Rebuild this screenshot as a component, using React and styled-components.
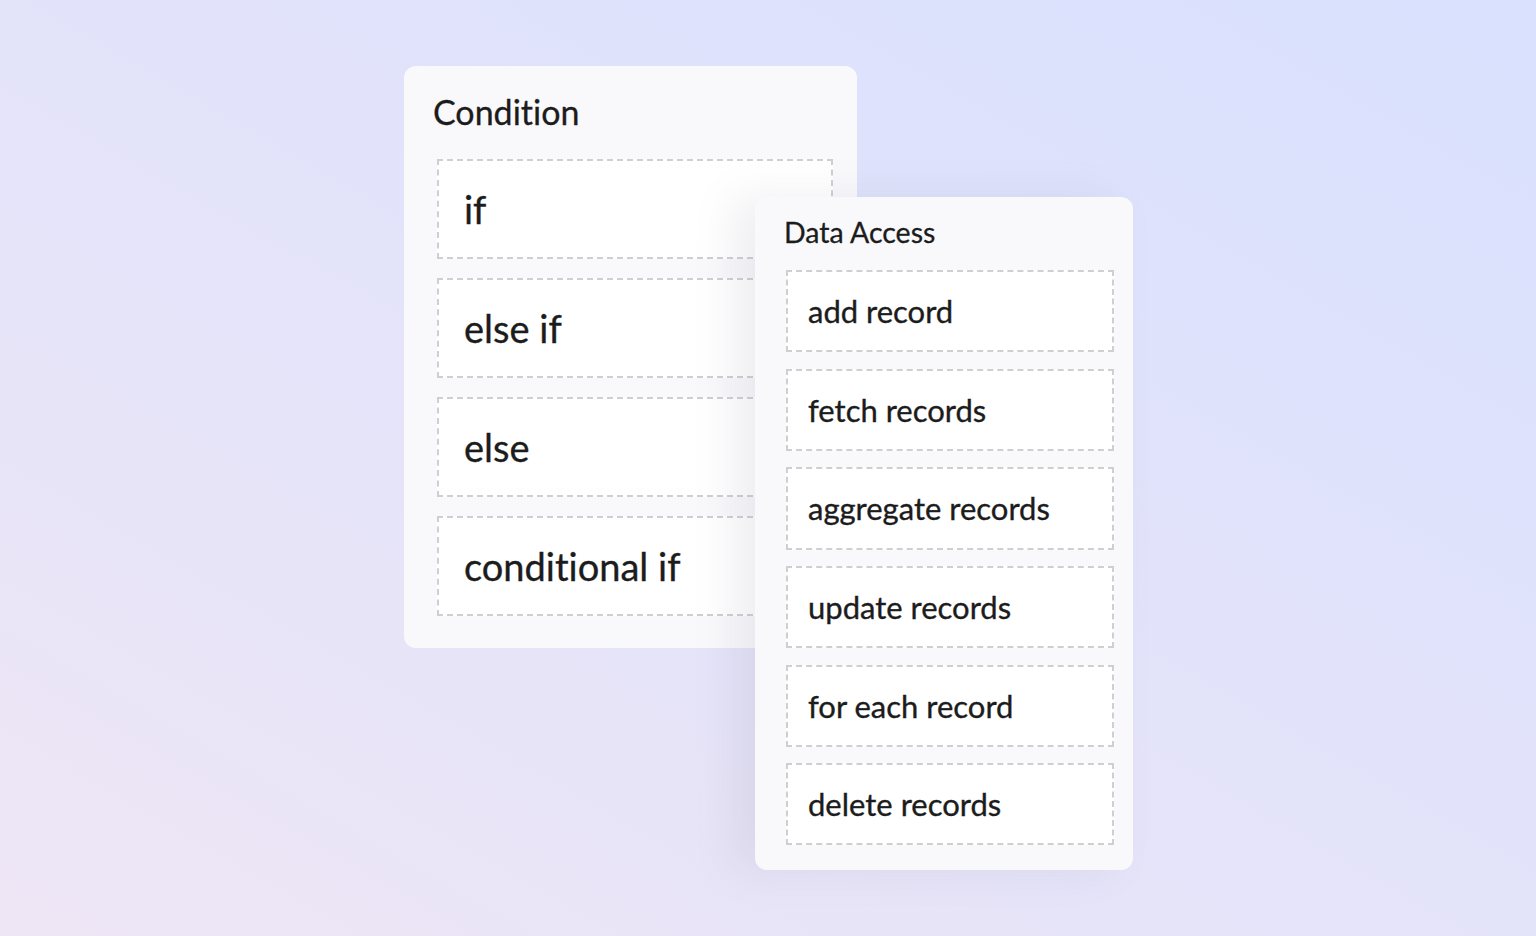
import React from "react";
import styled, { createGlobalStyle } from "styled-components";

const GlobalStyle = createGlobalStyle`
  html, body {
    margin: 0;
    padding: 0;
  }
  body {
    font-family: Lato, "Noto Sans", sans-serif;
    font-variant-ligatures: none;
    color: #1e1e1e;
  }
`;

const Page = styled.div`
  width: 1536px;
  height: 936px;
  background: linear-gradient(30deg, #eee6f5 0%, #e3e3fa 50%, #d9e1fe 100%);
  display: flex;
  align-items: flex-start;
  padding: 66px 0 0 404px;
  box-sizing: border-box;
  overflow: hidden;
`;

const Card = styled.div`
  background: #f9f9fc;
  border-radius: 12px;
  box-sizing: border-box;
  position: relative;
  display: flex;
  flex-direction: column;
`;

const ConditionCard = styled(Card)`
  width: 453px;
  padding: 26px 24px 32px 29px;
`;

const AccessCard = styled(Card)`
  width: 378px;
  margin-left: -102px;
  margin-top: 131px;
  padding: 18px 19px 25px 29px;
  box-shadow: -22px 0 40px rgba(120, 120, 150, 0.12);
`;

const Title = styled.h2`
  margin: 0;
  font-weight: 400;
  font-size: ${(p) => p.$size}px;
  line-height: 1.2;
  color: #1c1c1c;
  -webkit-text-stroke: 0.3px #1c1c1c;
`;

const List = styled.div`
  display: flex;
  flex-direction: column;
  gap: ${(p) => p.$gap}px;
  margin-top: ${(p) => p.$top}px;
  padding-left: ${(p) => p.$indent}px;
`;

const Item = styled.div`
  height: ${(p) => p.$h}px;
  background: #ffffff;
  border: 2px dashed #cfcfd2;
  box-sizing: border-box;
  display: flex;
  align-items: center;
  padding-left: ${(p) => p.$pad}px;
  font-size: ${(p) => p.$size}px;
  color: #1c1c1c;
  -webkit-text-stroke: 0.35px #1c1c1c;
`;

const conditions = ["if", "else if", "else", "conditional if"];
const access = [
  "add record",
  "fetch records",
  "aggregate records",
  "update records",
  "for each record",
  "delete records",
];

export default function App() {
  return (
    <>
      <GlobalStyle />
      <Page>
        <ConditionCard>
          <Title $size={34}>Condition</Title>
          <List $gap={19} $top={26} $indent={4}>
            {conditions.map((c) => (
              <Item key={c} $h={100} $pad={25} $size={38}>
                {c}
              </Item>
            ))}
          </List>
        </ConditionCard>
        <AccessCard>
          <Title $size={28.5}>Data Access</Title>
          <List $gap={16.4} $top={21} $indent={2}>
            {access.map((a) => (
              <Item key={a} $h={82.2} $pad={20} $size={31}>
                {a}
              </Item>
            ))}
          </List>
        </AccessCard>
      </Page>
    </>
  );
}
